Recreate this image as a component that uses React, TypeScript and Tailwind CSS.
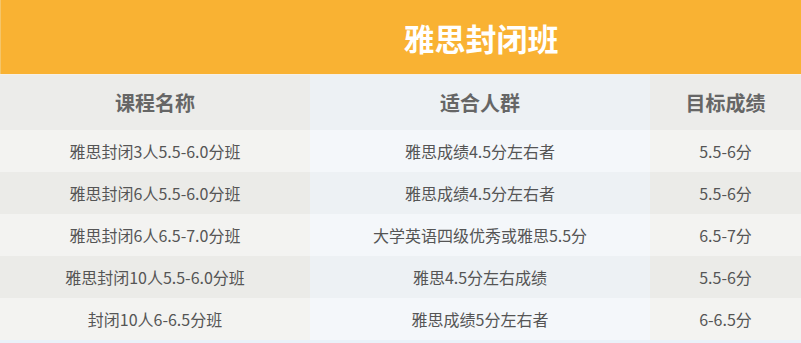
import React from "react";

const rows = [
  ["雅思封闭3人5.5-6.0分班", "雅思成绩4.5分左右者", "5.5-6分"],
  ["雅思封闭6人5.5-6.0分班", "雅思成绩4.5分左右者", "5.5-6分"],
  ["雅思封闭6人6.5-7.0分班", "大学英语四级优秀或雅思5.5分", "6.5-7分"],
  ["雅思封闭10人5.5-6.0分班", "雅思4.5分左右成绩", "5.5-6分"],
  ["封闭10人6-6.5分班", "雅思成绩5分左右者", "6-6.5分"],
];

export default function App() {
  return (
    <div
      className="w-[801px] h-[343px] overflow-hidden bg-[#eaf2f9]"
      style={{ fontFamily: '"Noto Sans CJK SC", "Microsoft YaHei", sans-serif' }}
    >
      <div className="h-[74px] bg-[#f9b233] grid grid-cols-[310px_340px_151px] items-center border-l border-[#f4c56a]">
        <div />
        <div className="text-center text-white font-bold text-[31px] leading-none">雅思封闭班</div>
        <div />
      </div>
      <div className="h-px bg-[#f6efe6]" />
      <div className="h-[55px] grid grid-cols-[310px_340px_151px] text-[20px] font-bold text-[#666666]">
        <div className="bg-[#ececea] flex items-center justify-center">课程名称</div>
        <div className="bg-[#edf1f4] flex items-center justify-center">适合人群</div>
        <div className="bg-[#ececea] flex items-center justify-center">目标成绩</div>
      </div>
      {rows.map((r, i) => {
        const odd = i % 2 === 0;
        return (
          <div
            key={i}
            className="h-[42px] grid grid-cols-[310px_340px_151px] text-[16px] text-[#555555]"
          >
            <div className={`${odd ? "bg-[#f3f3f1]" : "bg-[#ebebe8]"} flex items-center justify-center`}>{r[0]}</div>
            <div className={`${odd ? "bg-[#f4f7fa]" : "bg-[#edf1f4]"} flex items-center justify-center`}>{r[1]}</div>
            <div className={`${odd ? "bg-[#f3f3f1]" : "bg-[#ebebe8]"} flex items-center justify-center`}>{r[2]}</div>
          </div>
        );
      })}
    </div>
  );
}
